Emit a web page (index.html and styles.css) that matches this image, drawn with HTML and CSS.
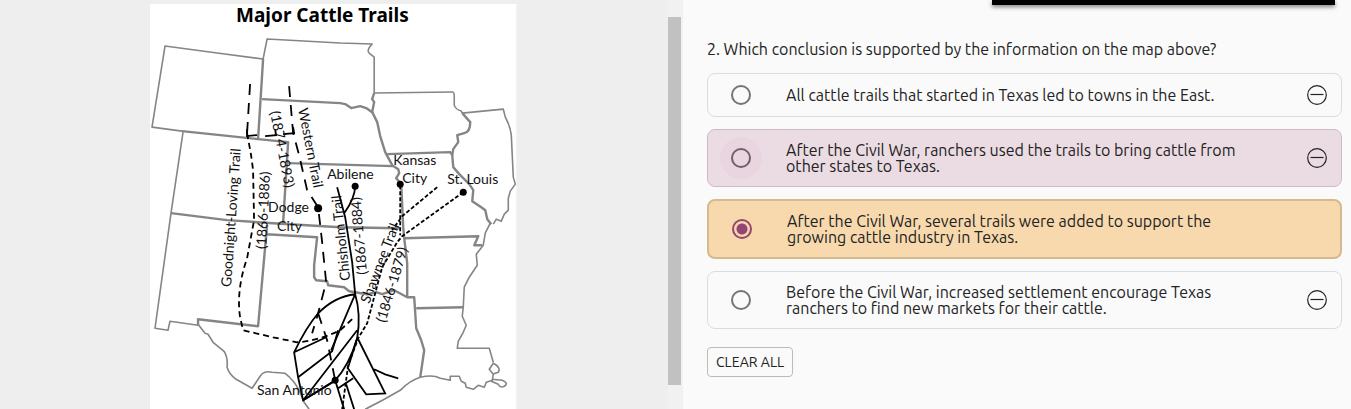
FILE: index.html
```html
<!DOCTYPE html>
<html lang="en">
<head>
<meta charset="UTF-8">
<meta name="viewport" content="width=device-width, initial-scale=1.0">
<title>Major Cattle Trails</title>
<link rel="stylesheet" href="styles.css">
</head>

<body>
<main class="split">

<!-- MAP -->
<section class="source">
<div class="figure">
<svg class="map" viewBox="150 4 366 405" role="img" aria-label="Major Cattle Trails map">
<rect class="paper" x="150" y="4" width="366" height="405"/>

<!-- state lines -->
<g class="border">
<path d="M263 59L217 53L165 46L152 127L182 131"/>
<path d="M263 59L267 39L340 43L372 44Q366 50 369 53L374 57V93L452 92Q454 92 454 96V105Q455 109 461 111L462 113L503 109L505 117Q510 126 511 135L513 177L515 184L510 191L508 198V210L504 214L501 221L496 219L493 224"/>
<path d="M183 132L171 213L155 328L168 330L170 321L198 325"/>
<path d="M490 223L485 233L483 245L476 254L477 265L469 277L464 287L463 307L462 316L466 325L463 332L458 341L457 348L489 348L493 362"/>
<path d="M198 324L205 333L208 334L213 342L224 351Q228 357 227 367Q229 374 236 379L252 388L260 376Q264 370 272 372L285 373Q294 380 299 390L304 402L309 409"/>
<path d="M365 409Q383 400 400 390Q410 380 420 377Q433 374 440 378L450 380L450 376L459 376L461 381L465 383L466 387L473 389L478 385L484 387L486 382L492 380L493 374L489 369L493 363Q501 367 498 372L492 374M492 379L502 380Q509 383 504 386Q500 388 498 384L491 381"/>
</g>
<g class="border thick">
<path d="M263 59L258 139M182 131L258 139L288 142L283 223M262 99L340 103L345 104L351 108L360 106L366 108L373 113"/>
<path d="M374 93L372 99L374 102L372 112L377 122L380 136L385 152L392 165L398 169L399 173L396 178L401 184L403 227L404 238L407 263V297"/>
<path d="M462 113L470 122Q470 132 464 133L457 135L458 142L453 149L452 155L453 167L459 174L469 184L473 190L472 201L481 207L485 210L487 219L491 224"/>
<path d="M387 154L450 152L452 155M288 163L393 166M171 213L227 220L273 223L340 227L400 228"/>
<path d="M267 225L258 326L198 319V325M267 234L317 237L314 265V277L316 280L327 281L328 285L344 287L349 291L367 294L376 292L382 294L394 290L407 297L414 297L416 328L421 340L424 350L420 377"/>
<path d="M404 238L478 236L474 245L482 245M416 308L463 307"/>
</g>

<!-- trails -->
<g class="trail">
<path class="long" d="M250 84L247 133"/>
<path class="long" d="M289 86L293 133L299 155L307 190L318 207L322 242L326 282L318 313L312 333M318 313L327 340L335 380"/>
<path class="short" d="M247 133L251 155L253 170L254 220L247 258Q236 290 240 317L243 330L273 337L297 342Q317 341 340 330L353 318"/>
<path d="M247 129V136L257 135M265 136L276 135L275 129M283 134L294 133L293 127"/>
<path d="M337 187L345 217L352 262L355 294M355 185Q355 198 344 213"/>
<path class="dots" d="M400 185V235M437 187L402 216L392 230M463 192L402 236L397 242L382 267L367 323L358 338L348 365L342 409"/>
</g>

<!-- San Antonio area -->
<g class="area">
<path d="M355 294Q335 296 318 313Q306 327 294 352L298 377L303 400L335 380Q349 365 357 338Q361 314 355 294L331 350"/>
<path d="M294 352L326 337M298 377L332 351L338 330M303 400L357 330M303 400L336 380"/>
<path d="M357 337L385 393L366 394L347 367M374 369L385 374L398 378M338 388L353 378M335 380L344 409M346 384L354 409M348 367L357 338"/>
</g>
<g class="town">
<circle cx="318" cy="208" r="4"/>
<circle cx="355" cy="186" r="3.5"/>
<circle cx="400" cy="184" r="3.5"/>
<circle cx="463" cy="192" r="3.5"/>
<circle cx="335" cy="380" r="3.5"/>
</g>

<g class="place">
<text class="map-title" x="236" y="22">Major Cattle Trails</text>
<text x="327" y="179">Abilene</text>
<text x="393" y="165">Kansas</text>
<text x="402" y="183">City</text>
<text x="447" y="184">St. Louis</text>
<text x="268" y="212">Dodge</text>
<text x="277" y="231">City</text>
<text x="257" y="395">San Antonio</text>
<text transform="translate(231 287) rotate(-86)">Goodnight-Loving Trail</text>
<text transform="translate(266 249) rotate(-87)">(1866-1886)</text>
<text transform="translate(298 109) rotate(79)">Western Trail</text>
<text transform="translate(270 112) rotate(79)">(1874-1893)</text>
<text transform="translate(350 280) rotate(-96)">Chisholm Trail</text>
<text transform="translate(367 274) rotate(-95)">(1867-1884)</text>
<text transform="translate(369 304) rotate(-69)">Shawnee Trail</text>
<text transform="translate(385 323) rotate(-73)">(1846-1879)</text>
</g>
</svg>
</div>
<div class="scroll"><div class="thumb"></div></div>
</section>

<!-- QUESTION -->
<section class="question">
<div class="topbar"></div>
<form>
<p class="prompt" id="prompt">2. Which conclusion is supported by the information on the map above?</p>

<ul class="options" aria-labelledby="prompt">
<li class="option">
<input type="radio" name="answer" id="a1">
<label for="a1">All cattle trails that started in Texas led to towns in the East.</label>
<button type="button" class="strike" aria-label="Eliminate choice">
<svg viewBox="0 0 20 20"><circle cx="10" cy="10" r="9.3"/><path d="M3.5 9.5h13"/></svg>
</button>
</li>
<li class="option hovered">
<input type="radio" name="answer" id="a2">
<label for="a2">After the Civil War, ranchers used the trails to bring cattle from other states to Texas.</label>
<button type="button" class="strike" aria-label="Eliminate choice">
<svg viewBox="0 0 20 20"><circle cx="10" cy="10" r="9.3"/><path d="M3.5 9.5h13"/></svg>
</button>
</li>
<li class="option selected">
<input type="radio" name="answer" id="a3" checked>
<label for="a3">After the Civil War, several trails were added to support the growing cattle industry in Texas.</label>
</li>
<li class="option">
<input type="radio" name="answer" id="a4">
<label for="a4">Before the Civil War, increased settlement encourage Texas ranchers to find new markets for their cattle.</label>
<button type="button" class="strike" aria-label="Eliminate choice">
<svg viewBox="0 0 20 20"><circle cx="10" cy="10" r="9.3"/><path d="M3.5 9.5h13"/></svg>
</button>
</li>
</ul>

<button type="reset" class="clear">CLEAR ALL</button>
</form>
</section>

</main>
</body>
</html>
```
FILE: styles.css
```css
*{
box-sizing:border-box;
}
body{
margin:0;
background:#fafafa;
color:#222;
font-family:Ubuntu,"Noto Sans",sans-serif;
font-size:16px;
}

.split{
display:grid;
grid-template-columns:minmax(0,683fr) minmax(0,668fr);
min-height:100vh;
}

/* MAP */
.source{
display:flex;
background:#eee;
}
.figure{
flex:1;
padding:4px 2px 0 0;
}
.map{
display:block;
width:55%;
margin:0 auto;
overflow:visible;
}
.paper{fill:#fff;}
.border{
fill:none;
stroke:#858585;
stroke-width:1.6;
stroke-linejoin:round;
}
.thick{stroke-width:2.4;}
.trail,.area{
fill:none;
stroke:#000;
stroke-width:1.8;
}
.long{stroke-dasharray:11 8;}
.short{stroke-dasharray:6 4;}
.dots{stroke-dasharray:4 2;}
.place{
font-family:"Myriad Pro",Lato,sans-serif;
font-size:14px;
fill:#111;
}
.map-title{
font-family:"Myriad Pro","Noto Sans",sans-serif;
font-size:19px;
font-weight:bold;
fill:#000;
}

/* SCROLLBAR */
.scroll{
display:flex;
width:15px;
padding:17px 2px 24px 0;
background:#f1f1f1;
}
.thumb{
flex:1;
background:#c1c1c1;
}

/* QUESTION */
.question{
padding:0 9px 32px 24px;
}
.topbar{
width:54%;
height:5px;
margin:0 7px 0 auto;
background:#000;
box-shadow:0 2px 4px rgba(0,0,0,0.5);
}
.prompt{
margin:34px 0 14px;
line-height:20px;
}
.options{
display:flex;
flex-direction:column;
gap:12px;
margin:0;
padding:0;
list-style:none;
}
.option{
display:flex;
align-items:center;
padding:11px 14px 11px 23px;
border:1px solid #dcdcdc;
border-radius:8px;
line-height:16px;
}
.option label{
max-width:472px;
margin:0 auto 0 35px;
padding:1px 0;
}
.hovered{
background:#ebdce3;
border-color:#ccbac5;
}
.selected{
background:#f7d9ad;
border:2px solid #d5b98f;
}

/* RADIO */
.option input{
flex:none;
appearance:none;
width:20px;
height:20px;
margin:0;
border:2px solid #757575;
border-radius:50%;
}
.option input:checked{
border-color:#954572;
background:radial-gradient(circle,#954572 5px,transparent 6px);
}
.hovered input{
border-color:#705f69;
background:#e9d5df;
box-shadow:0 0 0 11px #e9d5df;
}

.strike{
flex:none;
width:20px;
height:20px;
padding:0;
border:0;
background:none;
}
.strike svg{
display:block;
fill:none;
stroke:#222;
stroke-width:1.2;
}

.clear{
height:30px;
margin-top:18px;
padding:0 8px;
border:1px solid #bbb;
border-radius:4px;
background:#fafafa;
color:#222;
font-family:inherit;
font-size:14px;
}
```
